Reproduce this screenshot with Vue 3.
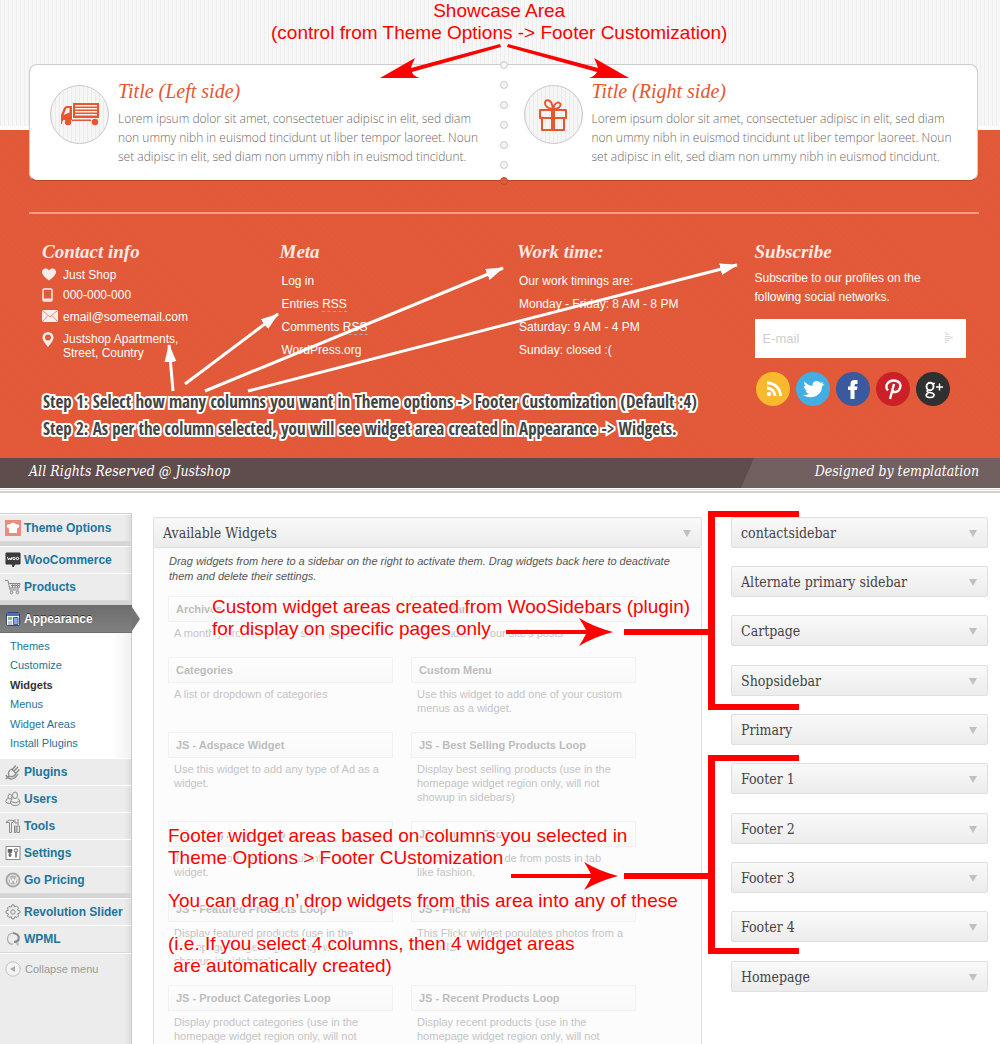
<script setup>
const lorem = 'Lorem ipsum dolor sit amet, consectetuer adipisc in elit, sed diam non ummy nibh in euismod tincidunt ut liber tempor laoreet. Noun set adipisc in elit, sed diam non ummy nibh in euismod tincidunt.'

const hours = ['Our work timings are:', 'Monday - Friday: 8 AM - 8 PM', 'Saturday: 9 AM - 4 PM', 'Sunday: closed :(']

const submenu = ['Themes', 'Customize', 'Widgets', 'Menus', 'Widget Areas', 'Install Plugins']

const menuGroups = [
  [{ label: 'Theme Options', icon: 'theme' }],
  [{ label: 'WooCommerce', icon: 'woo' }, { label: 'Products', icon: 'cart' }],
  [
    { label: 'Appearance', icon: 'appearance', open: true },
    { label: 'Plugins', icon: 'plug' },
    { label: 'Users', icon: 'users' },
    { label: 'Tools', icon: 'tools' },
    { label: 'Settings', icon: 'settings' },
    { label: 'Go Pricing', icon: 'pricing' },
  ],
  [{ label: 'Revolution Slider', icon: 'gear' }, { label: 'WPML', icon: 'wpml' }],
]

const widgets = [
  ['Archives', ['A monthly archive of your site’s posts']],
  ['Calendar', ['A calendar of your site’s posts']],
  ['Categories', ['A list or dropdown of categories']],
  ['Custom Menu', ['Use this widget to add one of your custom', 'menus as a widget.']],
  ['JS - Adspace Widget', ['Use this widget to add any type of Ad as a', 'widget.']],
  ['JS - Best Selling Products Loop', ['Display best selling products (use in the', 'homepage widget region only, will not', 'showup in sidebars)']],
  ['JS - Blog Author Info', ['This is a blog author output info', 'widget.']],
  ['JS - Embed Slider', ['Display embed code from posts in tab', 'like fashion.']],
  ['JS - Featured Products Loop', ['Display featured products (use in the', 'homepage widget region only, will not', 'showup in sidebars)']],
  ['JS - Flickr', ['This Flickr widget populates photos from a', 'Flickr ID.']],
  ['JS - Product Categories Loop', ['Display product categories (use in the', 'homepage widget region only, will not']],
  ['JS - Recent Products Loop', ['Display recent products (use in the', 'homepage widget region only, will not']],
]

const areas = ['contactsidebar', 'Alternate primary sidebar', 'Cartpage', 'Shopsidebar', 'Primary', 'Footer 1', 'Footer 2', 'Footer 3', 'Footer 4', 'Homepage']
</script>

<template>
  <div class="page">
    <section class="shop">
      <div class="texture"></div>
      <div class="showcase">
        <article class="promo">
          <span class="badge">
            <svg width="40" height="26" viewBox="0 0 40 26" aria-hidden="true">
              <g fill="#e8552f">
                <path fill-rule="evenodd" d="M1 20V13L4 6Q5 4 7 4H12V18H4Q2 18 2 22H1ZM3.500 13L9.500 10.500V6H7.500Q6.500 6 6 7Z" />
                <path fill-rule="evenodd" d="M13 1H39V16H13ZM15 3V4.500H37V3ZM15 6V7.500H37V6ZM15 9V10.500H37V9ZM15 12V13.500H37V12Z" />
                <path d="M12 17.500H31V19H12Z" />
                <circle cx="8" cy="20" r="3.200" /><circle cx="35" cy="20" r="3.200" />
              </g>
            </svg>
          </span>
          <div class="promo-body"><h2>Title (Left side)</h2><p>{{ lorem }}</p></div>
        </article>
        <article class="promo">
          <span class="badge">
            <svg width="30" height="34" viewBox="0 0 30 34" fill="none" stroke="#e8552f" stroke-width="2" aria-hidden="true">
              <path d="M2 12H28V20H2ZM4 20V32H26V20M15 12V32" stroke-linejoin="round" />
              <path d="M13.500 12V32M16.500 12V32" stroke-width="1" />
              <path d="M15 11C10 11 6.500 8 7 4.500C8 1 12 2 13.500 5Q14.500 8 15 11C20 11 23 9 22.500 6C21 3.500 18 4.500 16.500 7Q15.500 9 15 11" />
            </svg>
          </span>
          <div class="promo-body"><h2>Title (Right side)</h2><p>{{ lorem }}</p></div>
        </article>
        <div class="perforation"><i v-for="n in 7" :key="n"></i></div>
      </div>

      <footer class="columns">
        <section>
          <h3>Contact info</h3>
          <ul class="contact">
            <li>
              <svg width="14" height="13" viewBox="0 0 14 13"><path fill="#f7eeec" d="M7 12.500C1 8 0 6 0 3.700C0 .5 4.500-1 7 2.500C9.500-1 14 .5 14 3.700C14 6 13 8 7 12.500Z" /></svg>
              <span>Just Shop</span>
            </li>
            <li>
              <svg width="12" height="14" viewBox="0 0 12 14" fill="none" stroke="#f7eeec"><rect x="1" y="1" width="9" height="12" rx="1" stroke-width="1.400" /><path d="M1 11.500H10" stroke-width="2" /></svg>
              <span>000-000-000</span>
            </li>
            <li>
              <svg width="16" height="12" viewBox="0 0 16 12"><path fill="#f7eeec" d="M0 0H16V12H0Z" /><path d="M0 0L8 7L16 0M0 12L6 5.500M16 12L10 5.500" fill="none" stroke="#ec9178" /></svg>
              <a href="#">email@someemail.com</a>
            </li>
            <li>
              <svg width="12" height="15" viewBox="0 0 12 15"><path fill="#f7eeec" fill-rule="evenodd" d="M6 15C2 10 .5 8 .5 5.500A5.500 5.500 0 0 1 11.500 5.500C11.500 8 10 10 6 15ZM6 2.500A3 3 0 1 0 6 8.500A3 3 0 1 0 6 2.500Z" /></svg>
              <span>Justshop Apartments,<br />Street, Country</span>
            </li>
          </ul>
        </section>
        <section>
          <h3>Meta</h3>
          <ul class="list">
            <li><a href="#">Log in</a></li>
            <li><a href="#">Entries <abbr>RSS</abbr></a></li>
            <li><a href="#">Comments <abbr>RSS</abbr></a></li>
            <li><a href="#">WordPress.org</a></li>
          </ul>
        </section>
        <section>
          <h3>Work time:</h3>
          <ul class="list">
            <li v-for="h in hours" :key="h">{{ h }}</li>
          </ul>
        </section>
        <section>
          <h3>Subscribe</h3>
          <p class="intro">Subscribe to our profiles on the following social networks.</p>
          <form class="subscribe" @submit.prevent>
            <input type="email" placeholder="E-mail" aria-label="E-mail" />
            <button type="submit" aria-label="Send">
              <svg width="8" height="12" viewBox="0 0 8 12"><path d="M1 0V12M3 2V10M5 4V8M7 5V7" stroke="#b4b4b4" stroke-dasharray="1 1" /></svg>
            </button>
          </form>
          <nav class="social">
            <a href="#" class="rss" aria-label="RSS"><svg viewBox="0 0 34 34"><circle cx="13" cy="22" r="2.200" fill="#fff" /><path d="M11 16A8 8 0 0 1 19 24M11 11A13 13 0 0 1 24.500 24" fill="none" stroke="#fff" stroke-width="2.800" /></svg></a>
            <a href="#" class="twitter" aria-label="Twitter"><svg viewBox="0 0 34 34"><path fill="#fff" d="M7 23Q11 23.500 13 21.500Q10 21 9.500 18.500H11Q8 17 8 14H9.500Q7.500 12 8.500 9.500Q12 13.500 16.500 14C16 9 22 7.500 24.500 11L27.500 10L26 12.500L28.500 12L26 14.500C26 24 15 28 7 23Z" /></svg></a>
            <a href="#" class="facebook" aria-label="Facebook"><svg viewBox="0 0 34 34"><path fill="#fff" d="M14.500 27V18H12V14.500H14.500V12Q14.500 8 18.500 8H21.500V12H19.500Q18.500 12 18.500 13.500V14.500H21.500L21 18H18.500V27Z" /></svg></a>
            <a href="#" class="pinterest" aria-label="Pinterest"><svg viewBox="0 0 34 34"><path d="M12 18.500C8 14 12 8.500 17.500 8.500C23 8.500 25.500 12 24 16C22.500 21 17 21 16 18M18 12L14 27" fill="none" stroke="#fff" stroke-width="2.400" /></svg></a>
            <a href="#" class="google" aria-label="Google plus"><svg viewBox="0 0 34 34" fill="none" stroke="#fff"><ellipse cx="14" cy="14.500" rx="3.500" ry="3.800" stroke-width="1.900" /><path d="M16 11.500H19M12 18Q9.500 20 14 20.500C21 21.500 18 26 13.500 25.500C9 25 9.500 22 12.500 21" stroke-width="1.600" /><path d="M20 15H27M23.500 11.500V18.500" stroke-width="1.400" /></svg></a>
          </nav>
        </section>
      </footer>

      <div class="legal">
        <span>All Rights Reserved @ Justshop</span>
        <span class="credit">Designed by templatation</span>
      </div>
    </section>

    <section class="admin">
      <nav class="menu">
        <ul v-for="(group, g) in menuGroups" :key="g">
          <li v-for="item in group" :key="item.label">
            <a href="#" :class="['item', { current: item.open }]">
              <svg width="16" height="16" viewBox="0 0 16 16" fill="none" stroke="#8a8a8a" aria-hidden="true">
                <template v-if="item.icon === 'theme'">
                  <path d="M0 0H16V16H0Z" fill="#ea8c7c" stroke="none" /><path d="M4 13V8.500C0 7 2 3 5 4.500C6 2 10 2 11 4.500C14 3 16 7 12 8.500V13Z" fill="#fff" stroke="none" />
                </template>
                <template v-else-if="item.icon === 'woo'">
                  <path d="M1 1H15V12H10L8 15L7 12H1Z" fill="#3d3d3d" stroke="#333" /><path d="M2.500 5L3.500 8L5 6L6 8L7 5" stroke="#fff" /><circle cx="9" cy="6.500" r="1.200" stroke="#fff" /><circle cx="12.500" cy="6.500" r="1.200" stroke="#fff" />
                </template>
                <template v-else-if="item.icon === 'cart'">
                  <path d="M0 1.500H3L5 11H14M4 4.500H15L14 9H5M6 6.500H14M7.500 5V9M10 5V9M12.500 5V9" /><circle cx="6.500" cy="13.500" r="1.300" /><circle cx="12.500" cy="13.500" r="1.300" />
                </template>
                <template v-else-if="item.icon === 'appearance'">
                  <rect x="1.500" y="1.500" width="13" height="13" rx="1" fill="#fff" stroke="#2e4a7d" /><path d="M2 2H14V5H2Z" fill="#4874b6" stroke="none" /><path d="M3 6H7V9H3Z" fill="#8ac05a" stroke="none" /><path d="M3 11H7M3 13H7" /><path d="M8.500 6.500H13V13.500H8.500Z" fill="#87a9dd" stroke="#3b62a5" />
                </template>
                <template v-else-if="item.icon === 'plug'">
                  <path d="M1 15Q3 13 4 12M4 12Q2 7 7 5L11 9.500Q9 14 4 12ZM7.500 5L11 1.500M11 9L14.500 5.500M9 7L13 3M1 11Q2 14 6 15Q10 15 13 10" stroke-width="1.300" />
                </template>
                <template v-else-if="item.icon === 'users'">
                  <path d="M5 3Q7 3 7 6Q7 8 5 8Q3 8 3 6Q3 3 5 3ZM10 1Q12.500 1 12.500 4.500Q12.500 7.500 10 7.500Q7.500 7.500 7.500 4.500Q7.500 1 10 1Z" /><path d="M3 7.500Q.8 8 .8 10.500Q.8 12.500 5.500 12.500M7.500 7.500Q5.500 9 5.500 12Q6 14.500 10 14.500Q14.800 14.500 14.800 11.500Q14.800 8 12.500 7.500M6 10.500Q10 13 14.500 10.500" />
                </template>
                <template v-else-if="item.icon === 'tools'">
                  <path d="M1 4Q4 1 9 2.500L8 4.500H6.500V14.500H4.500V4.500H1ZM9.500 7.500V14.500H11V7.500M13 1V7M12 8H14.500V14.500H12ZM10 1.500V5H12.500" />
                </template>
                <template v-else-if="item.icon === 'settings'">
                  <rect x="1" y="1.500" width="14" height="13" fill="#fff" /><path d="M5 4V12M3.500 4V7H6.500V4M11 7V12.500M3.500 10H6.500" stroke-width="1.500" stroke="#666" /><circle cx="11" cy="5.500" r="1.700" stroke="#666" />
                </template>
                <template v-else-if="item.icon === 'pricing'">
                  <circle cx="8" cy="8" r="6.800" fill="#b4b4b4" stroke="#a8a8a8" stroke-width="1.500" /><circle cx="8" cy="8" r="5" stroke="#eee" /><path d="M4.500 5.500L6 10.500L8 6.500L10 10.500L11.500 5.500" stroke="#f8f8f8" stroke-width="1.200" />
                </template>
                <template v-else-if="item.icon === 'gear'">
                  <circle cx="8" cy="8" r="2.200" /><path d="M6.500 3L7 .8H9L9.500 3L11.500 2L13.500 4L12.500 6L15 7V9L12.700 9.700L13.500 12L12 13.500L10 12.500L9 15H7L6.300 12.700L4 13.500L2.500 12L3.500 10L1 9V7L3.300 6.300L2.500 4L4 2.500Z" />
                </template>
                <template v-else>
                  <path d="M8.500 13Q3 14 2.500 8Q2.500 2.500 8.500 2" stroke-width="1.200" stroke="#aaa" /><path d="M8 2Q15 3 13.500 8.500Q12.500 11 9 11" stroke-width="2.200" stroke="#8c8c8c" /><path d="M11 13H14M13 11.500V15" stroke="#b5b5b5" />
                </template>
              </svg>
              {{ item.label }}
            </a>
            <ul v-if="item.open" class="submenu">
              <li v-for="s in submenu" :key="s"><a href="#" :class="{ active: s === 'Widgets' }">{{ s }}</a></li>
            </ul>
          </li>
        </ul>
        <button type="button" class="collapse">
          <svg width="16" height="16" viewBox="0 0 16 16"><circle cx="8" cy="8" r="7.200" fill="#f3f3f3" stroke="#c3c3c3" /><path d="M10 5V11L5 8Z" fill="#aaa" /></svg>
          Collapse menu
        </button>
      </nav>

      <section class="available">
        <button type="button" class="bar">Available Widgets<i></i></button>
        <div class="panel">
          <p class="help">Drag widgets from here to a sidebar on the right to activate them. Drag widgets back here to deactivate them and delete their settings.</p>
          <div class="widgets">
            <article v-for="[name, lines] in widgets" :key="name">
              <h4>{{ name }}</h4>
              <p><template v-for="line in lines" :key="line">{{ line }}<br /></template></p>
            </article>
          </div>
        </div>
      </section>

      <aside class="areas">
        <button v-for="a in areas" :key="a" type="button" class="bar">{{ a }}<i></i></button>
      </aside>
    </section>

    <div class="notes">
      <svg width="1000" height="1044" viewBox="0 0 1000 1044" aria-hidden="true">
        <defs>
          <marker id="tip" markerUnits="userSpaceOnUse" markerWidth="18" markerHeight="14" refX="17" refY="6" orient="auto"><path d="M0 0L18 6L0 12Z" fill="#fff" /></marker>
        </defs>
        <g stroke="#fff" stroke-width="3">
          <path d="M173 391L169 345" marker-end="url(#tip)" />
          <path d="M185 384L278 314" marker-end="url(#tip)" />
          <path d="M205 391L503 268" marker-end="url(#tip)" />
          <path d="M248 391L737 265" marker-end="url(#tip)" />
        </g>
        <g fill="#f00">
          <path d="M500 44L501 47L412 72Q413 76 420 78L380 78L415 58Q412 64 411 68Z" />
          <path d="M508 44L507 47L597 72Q595 76 589 78L629 78L594 58Q597 64 598 68Z" />
          <path d="M506 630H586Q583 624 579 618Q594 627 613 632Q594 637 579 646Q583 640 586 634H506Z" />
          <path d="M511 874H591Q588 868 584 862Q599 871 618 876Q599 881 584 890Q588 884 591 878H511Z" />
          <path d="M708 511H799V517H715V704H799V710H708V635H624V629H708Z" />
          <path d="M708 755H799V761H715V948H799V954H708V879H624V873H708Z" />
        </g>
      </svg>
      <p class="red showcase-note">Showcase Area<br />(control from Theme Options -&gt; Footer Customization)</p>
      <p class="steps">Step 1: Select how many columns you want in Theme options -&gt; Footer Customization (Default :4)<br />Step 2: As per the column selected, you will see widget area created in Appearance -&gt; Widgets.</p>
      <p class="red custom-note">Custom widget areas created from WooSidebars (plugin)<br />for display on specific pages only</p>
      <div class="red footer-note">
        <p>Footer widget areas based on columns you selected in<br />Theme Options &gt; Footer CUstomization</p>
        <p>You can drag n’ drop widgets from this area into any of these</p>
        <p>(i.e. If you select 4 columns, then 4 widget areas<br />&nbsp;are automatically created)</p>
      </div>
    </div>
  </div>
</template>

<style>
body { margin: 0; background: #fff; }
</style>

<style scoped>
.page { position: relative; min-height: 100vh; overflow: hidden; display: flex; flex-direction: column; font-family: "Liberation Sans", Arial, sans-serif; }
h2, h3, h4, p, ul { margin: 0; padding: 0; font-weight: normal; }
ul { list-style: none; }
a { color: inherit; text-decoration: none; }
button { font: inherit; border: 0; padding: 0; background: none; cursor: pointer; }

.shop { background: repeating-linear-gradient(45deg, #e35a39 0 2px, #e15938 2px 4px); border-bottom: 1px solid #fff; }
.texture { height: 126px; border-bottom: 4px solid #fdfdfd; background: repeating-linear-gradient(90deg, #eeeeee 0 1px, #f7f7f7 1px 4px); }
.showcase { position: relative; display: grid; grid-template-columns: 1fr 1fr; margin: -66px 22px 0 29px; min-height: 117px; box-sizing: border-box; border: 1px solid #cfcbca; border-bottom-color: #b0482f; border-radius: 8px; background: #fff; }
.promo { display: flex; gap: 9px; padding: 14px 15px 0 20px; }
.badge { flex: none; display: grid; place-items: center; width: 57px; height: 57px; margin-top: 6px; border: 1px solid #cdc6c6; border-radius: 50%; background: repeating-linear-gradient(90deg, #ebebeb 0 1px, #f6f6f6 1px 4px); }
.promo h2 { font: italic 20px/24px "Liberation Serif", Georgia, serif; color: #e8552f; }
.promo p { margin-top: 6px; font: 300 12px/19px "Open Sans", sans-serif; color: #6f6662; }
.perforation { position: absolute; left: 50%; top: -4px; display: grid; gap: 12px; transform: translateX(-50%); }
.perforation i { width: 6px; height: 6px; border: 1px solid #cdc8c8; border-radius: 50%; background: #f4f4f4; }
.perforation i:last-child { margin-top: -4px; background: #e25a38; border-color: #c0502f; }

.columns { display: grid; grid-template-columns: repeat(4, 1fr); gap: 26px; margin: 31px 21px 0 29px; padding: 26px 13px 0; border-top: 2px solid #ee9f88; min-height: 218px; color: #fff; }
h3 { font: italic bold 19px/24px "Liberation Serif", Georgia, serif; color: #fbe9e4; }
.contact { font-size: 12px; line-height: 14px; margin-top: 4px; }
.contact li { display: grid; grid-template-columns: 21px 1fr; margin-bottom: 6px; }
.contact li:nth-child(2), .contact li:nth-child(3) { margin-bottom: 8px; }
.list { margin: 6px 0 0 2px; font-size: 12px; line-height: 23px; }
abbr { border-bottom: 1px dashed #a9a9a0; }
.intro { margin-top: 5px; font-size: 12px; line-height: 19px; }
.subscribe { display: flex; align-items: center; margin-top: 12px; background: #fff; height: 39px; padding: 0 13px 0 8px; }
.subscribe input { flex: 1; min-width: 0; border: 0; outline: 0; padding: 0; background: none; font: 13px "Liberation Sans", Arial, sans-serif; }
.subscribe input::placeholder { color: #cfcfcf; }
.social { display: flex; gap: 6px; margin: 14px 0 0 1px; }
.social a { width: 34px; height: 34px; border-radius: 50%; }
.social svg { display: block; }
.rss { background: #f8b92e; }
.twitter { background: #42aee3; }
.facebook { background: #3a599f; }
.pinterest { background: #cb2027; }
.google { background: #303030; }
.legal { display: flex; justify-content: space-between; height: 30px; color: #fff; background: #5f4c4d; font: italic 14px/27px "DejaVu Serif Condensed", "DejaVu Serif", serif; padding-left: 29px; }
.credit { width: 259px; box-sizing: border-box; padding-right: 21px; text-align: right; background: #725f60; clip-path: polygon(13px 0, 100% 0, 100% 100%, 0 100%); }

.admin { flex: 1; display: flex; align-items: stretch; border-top: 2px solid #d4d2ca; box-shadow: 0 -1px #fff, 0 -2px #dedcd6; margin-top: 2px; }
.menu { flex: none; width: 131px; margin-top: 20px; border-right: 1px solid #ccc; background: linear-gradient(90deg, #ececec 124px, #dedede); font-size: 12px; }
.menu > ul { border-top: 1px solid #ccc; padding-bottom: 1px; }
.menu > ul + ul { border-top: 4px solid #d5d5d5; }
.item { position: relative; display: flex; align-items: center; gap: 3px; height: 26px; padding-left: 5px; border-top: 1px solid #fff; border-bottom: 1px solid #d9d9d9; margin-bottom: -1px; font-weight: bold; color: #21759b; }
.item svg { flex: none; }
.item.current { color: #fff; background: linear-gradient(#6d6d6d, #808080); border-color: #6d6d6d; z-index: 1; margin-right: -1px; text-shadow: 0 -1px #333; }
.item.current::after { content: ""; position: absolute; left: 100%; top: 1px; width: 8px; height: 24px; background: #757575; clip-path: polygon(0 0, 100% 50%, 0 100%); }
.submenu { padding: 4px 0 5px 10px; background: linear-gradient(90deg, #fff 112px, #f0f0f0); font-size: 11px; line-height: 20px; color: #21759b; }
.submenu li:nth-child(even) { line-height: 19px; }
.submenu .active { font-weight: bold; color: #333; }
.collapse { display: flex; align-items: center; gap: 4px; width: 100%; height: 30px; padding-left: 5px; border-top: 1px solid #fff; font-size: 11px; color: #999; }

.bar { position: relative; display: block; width: 100%; height: 31px; padding: 0 9px; border: 1px solid #dfdfdf; border-radius: 2px; background: linear-gradient(#f9f9f9, #ececec); text-align: left; font: 14px "DejaVu Serif Condensed", "DejaVu Serif", serif; color: #444; }
.bar i { position: absolute; right: 10px; top: 12px; border: solid transparent; border-width: 7px 4px 0; border-top-color: #c0c0c0; }
.available { flex: 1; display: flex; flex-direction: column; margin: 24px 0 0 21px; }
.panel { flex: 1; border: 1px solid #dfdfdf; border-width: 0 1px; background: #fcfcfc; padding: 6px 14px 0; }
.help { font-size: 11px; line-height: 15px; font-style: italic; color: #555; padding: 0 1px; }
.widgets { display: grid; grid-template-columns: 225px 225px; column-gap: 18px; margin-top: 12px; }
.widgets h4 { height: 26px; box-sizing: border-box; border: 1px solid #f1f1f1; background: linear-gradient(#fdfdfd, #f9f9f9); padding-left: 7px; font: bold 11px/24px "Liberation Sans", Arial, sans-serif; color: #bdbdbd; }
.widgets p { padding: 4px 6px 17px; font-size: 11px; line-height: 14px; color: #c4c4c4; white-space: nowrap; }
.widgets article:nth-last-child(-n+2) p { padding-bottom: 0; }
.areas { flex: none; width: 257px; margin: 24px 12px 0 29px; }
.areas .bar { margin-bottom: 18px; }
.areas .bar:nth-child(3n) { margin-bottom: 19px; }

.notes { position: absolute; inset: 0; pointer-events: none; }
.notes > * { position: absolute; left: 0; top: 0; white-space: nowrap; }
.red { color: #f00; font-size: 19px; line-height: 22px; }
.notes .showcase-note { left: 271px; text-align: center; }
.steps { font: bold 17px/27px "Open Sans Condensed", "Roboto Condensed", "Roboto", sans-serif; color: #444; -webkit-text-stroke: 4px #fff; paint-order: stroke fill; }
.notes .steps { left: 43px; top: 388px; }
.notes .custom-note { left: 212px; top: 596px; }
.notes .footer-note { left: 168px; top: 825px; }
.custom-note, .footer-note { -webkit-text-stroke: 3px #fcfcfc; paint-order: stroke fill; }
.footer-note p + p { margin-top: 21px; }
</style>
